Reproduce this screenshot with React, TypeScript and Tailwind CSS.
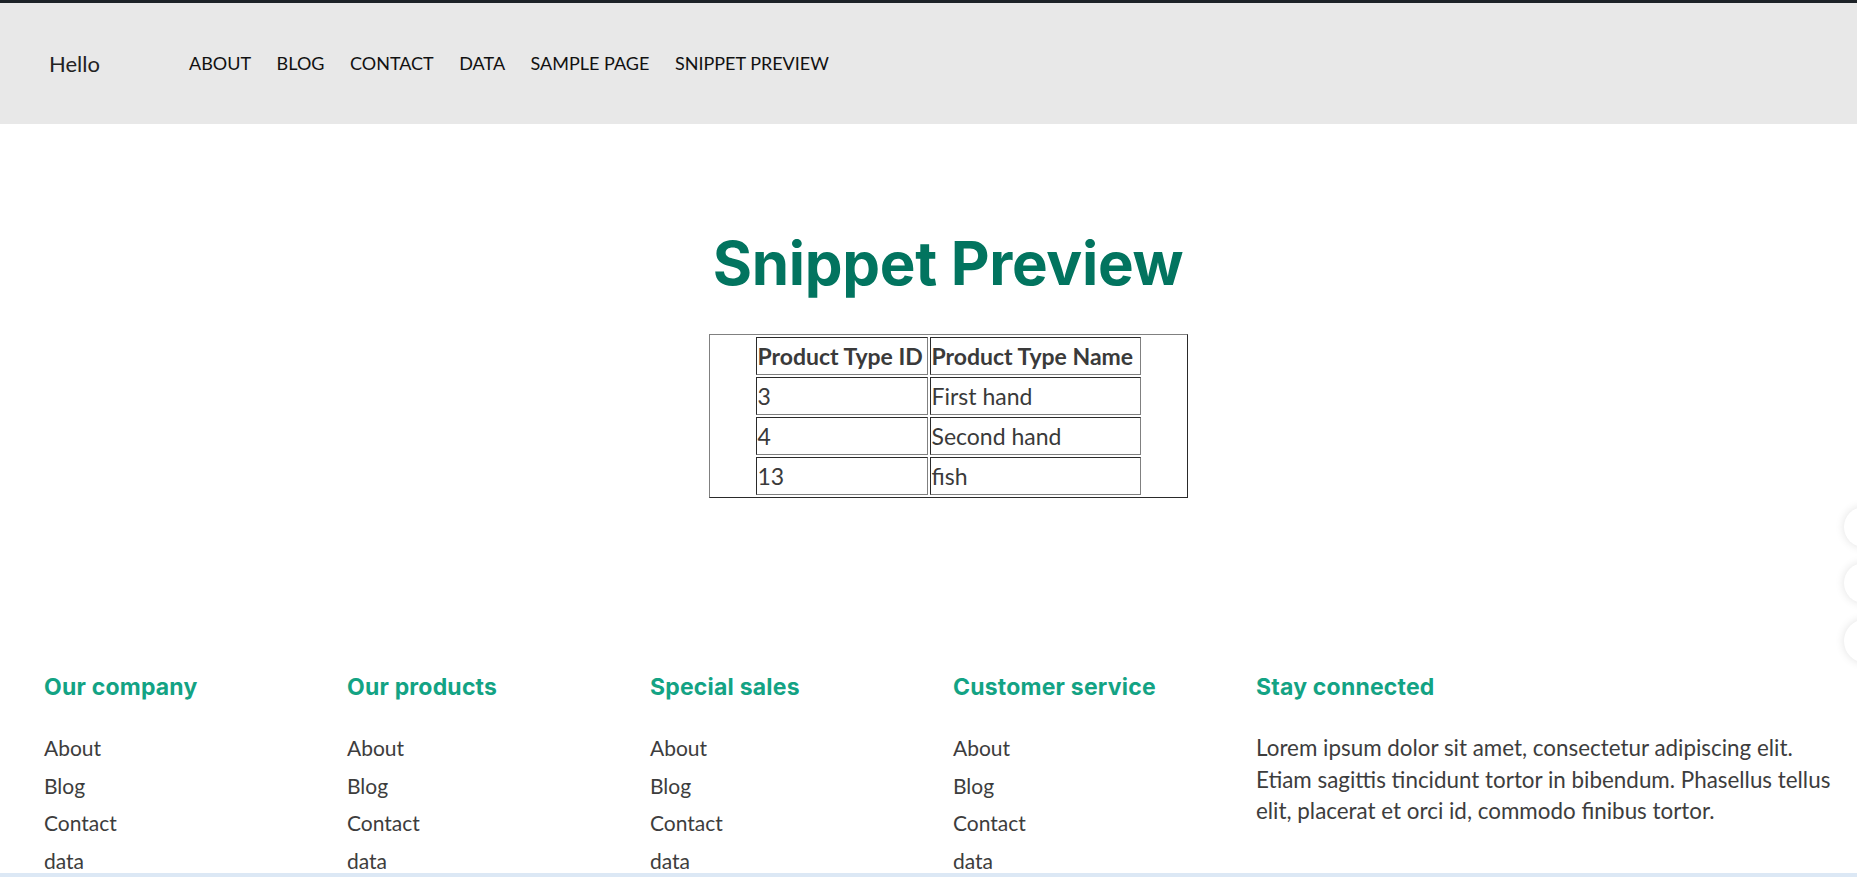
const navItems = ["ABOUT", "BLOG", "CONTACT", "DATA", "SAMPLE PAGE", "SNIPPET PREVIEW"]

const rows = [
  { id: "3", name: "First hand" },
  { id: "4", name: "Second hand" },
  { id: "13", name: "fish" },
]

const footerCols = ["Our company", "Our products", "Special sales", "Customer service"]
const footerLinks = ["About", "Blog", "Contact", "data"]

const cell =
  "border border-t-[#2a2a2a] border-l-[#2a2a2a] border-r-[#808080] border-b-[#808080] p-[1px] text-left align-middle"

export default function App() {
  return (
    <div className="relative min-h-screen bg-white text-[#3d3d3d] font-['Lato',sans-serif] overflow-hidden">
      {/* Header */}
      <header className="h-[124px] border-t-[3px] border-[#1d2227] bg-[#e8e8e8] flex items-center pl-[49px]">
        <a href="#" className="w-[140px] text-[22px] text-[#222]">
          Hello
        </a>
        <nav className="flex items-center gap-[25.5px] text-[18px] text-[#111]">
          {navItems.map((item) => (
            <a key={item} href="#">
              {item}
            </a>
          ))}
        </nav>
      </header>

      {/* Content */}
      <main className="flex flex-col items-center pl-[39px] pt-[103px]">
        <h1 className="font-['Inter',sans-serif] font-bold text-[60px] leading-[72px] text-[#02745f] tracking-[-0.3px]">
          Snippet Preview
        </h1>
        <div className="mt-[35px] w-[479px] border border-t-[#808080] border-l-[#808080] border-r-[#2a2a2a] border-b-[#2a2a2a]">
          <table className="mx-auto border-separate border-spacing-[2px] text-[23px] leading-[34px] text-[#3a3a3a]">
            <thead>
              <tr>
                <th className={`${cell} w-[172px] font-bold`}>Product Type ID</th>
                <th className={`${cell} w-[211px] font-bold`}>Product Type Name</th>
              </tr>
            </thead>
            <tbody>
              {rows.map((r) => (
                <tr key={r.id}>
                  <td className={cell}>{r.id}</td>
                  <td className={cell}>{r.name}</td>
                </tr>
              ))}
            </tbody>
          </table>
        </div>
      </main>

      {/* Footer */}
      <footer className="mt-[175px] grid grid-cols-[303px_303px_303px_303px_1fr] pl-[44px]">
        {footerCols.map((title) => (
          <div key={title}>
            <h3 className="font-['Inter',sans-serif] font-bold text-[23px] leading-[28px] tracking-[0.2px] text-[#13a384]">
              {title}
            </h3>
            <ul className="mt-[28px] text-[21px] leading-[37.5px]">
              {footerLinks.map((l) => (
                <li key={l}>
                  <a href="#">{l}</a>
                </li>
              ))}
            </ul>
          </div>
        ))}
        <div>
          <h3 className="font-['Inter',sans-serif] font-bold text-[23px] leading-[28px] tracking-[0.2px] text-[#13a384]">
            Stay connected
          </h3>
          <p className="mt-[31px] w-[585px] text-[22.4px] leading-[31.5px]">
            Lorem ipsum dolor sit amet, consectetur adipiscing elit. Etiam sagittis tincidunt tortor in bibendum.
            Phasellus tellus elit, placerat et orci id, commodo finibus tortor.
          </p>
        </div>
      </footer>

      {/* Floating share buttons, mostly off-screen */}
      <div className="absolute right-[-31px] top-[507px] flex flex-col gap-[16px]">
        <span className="w-[40px] h-[40px] rounded-full bg-white shadow-[0_0_10px_rgba(0,0,0,0.12)]" />
        <span className="w-[40px] h-[40px] rounded-full bg-white shadow-[0_0_10px_rgba(0,0,0,0.12)]" />
        <span className="w-[44px] h-[44px] rounded-full bg-white shadow-[0_0_10px_rgba(0,0,0,0.12)]" />
      </div>

      <div className="fixed bottom-0 left-0 right-0 h-[4px] bg-[#dce8f5]" />
    </div>
  )
}
